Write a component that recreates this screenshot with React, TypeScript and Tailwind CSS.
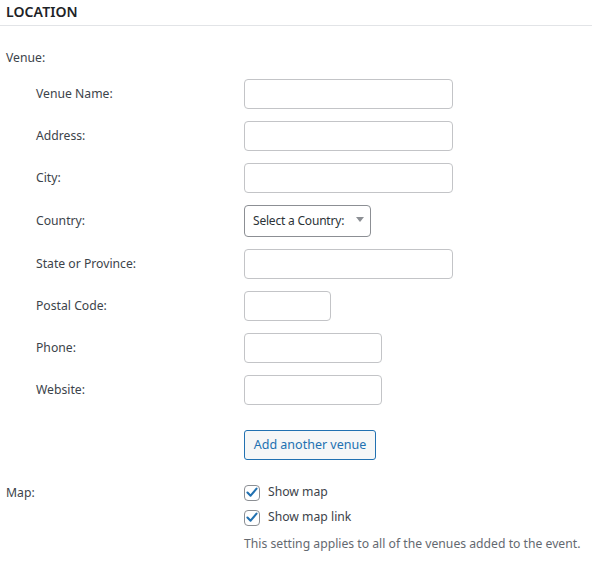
import React from "react";

const font = { fontFamily: '"Noto Sans", "Open Sans", sans-serif' };

function Check({ label }: { label: string }) {
  return (
    <label className="flex items-center h-[25px]">
      <span className="w-4 h-4 shrink-0 rounded-[4px] border border-[#8c8f94] bg-white flex items-center justify-center">
        <svg width="15" height="15" viewBox="0 0 20 20">
          <path d="M3.5 10 L8 14.5 L16.5 4.5" fill="none" stroke="#2271b1" strokeWidth="3" strokeLinecap="round" strokeLinejoin="round" />
        </svg>
      </span>
      <span className="ml-2 text-[12.2px] text-[#3c434a] whitespace-nowrap">{label}</span>
    </label>
  );
}

export default function App() {
  const rows: { label: string; w: string; select?: boolean }[] = [
    { label: "Venue Name:", w: "w-[209px]" },
    { label: "Address:", w: "w-[209px]" },
    { label: "City:", w: "w-[209px]" },
    { label: "Country:", w: "w-[127px]", select: true },
    { label: "State or Province:", w: "w-[209px]" },
    { label: "Postal Code:", w: "w-[87px]" },
    { label: "Phone:", w: "w-[138px]" },
    { label: "Website:", w: "w-[138px]" },
  ];
  return (
    <div className="w-[592px] h-[568px] bg-white text-[#3c434a]" style={font}>
      <div className="pl-[6px] pt-[2px] h-[26px] border-b border-[#e2e4e7]">
        <h2 className="text-[14px] font-semibold text-[#1d2327] leading-[20px] tracking-[0.1px]">LOCATION</h2>
      </div>
      <div className="pl-[6px] mt-[22px] text-[12.2px] leading-[20px]">Venue:</div>
      <div className="flex flex-col gap-[12px] mt-[11px]">
        {rows.map((r) => (
          <div key={r.label} className={`flex items-center ${r.select ? "h-[32px]" : "h-[30px]"}`}>
            <div className="w-[244px] shrink-0 pl-[36px] text-[12.2px] text-[#3c434a]">{r.label}</div>
            {r.select ? (
              <div className={`${r.w} h-[32px] shrink-0 border border-[#8c8f94] rounded-[4px] flex items-start justify-between pl-[8px] pr-[6px] text-[12px] tracking-[-0.2px] text-[#2c3338]`}>
                <span className="whitespace-nowrap mt-[6px]">Select a Country:</span>
                <svg width="8" height="5" viewBox="0 0 8 5" className="mt-[11px] shrink-0">
                  <path d="M0 0 L8 0 L4 5 Z" fill="#8c8f94" />
                </svg>
              </div>
            ) : (
              <div className={`${r.w} h-[30px] shrink-0 border border-[#c3c4c7] rounded-[4px] bg-white`} />
            )}
          </div>
        ))}
      </div>
      <div className="pl-[244px] mt-[25px]">
        <button className="h-[30px] w-[132px] border border-[#2271b1] rounded-[3px] bg-[#f6f7f7] text-[#2271b1] text-[12.5px] flex items-center justify-center whitespace-nowrap">
          Add another venue
        </button>
      </div>
      <div className="flex mt-[20px]">
        <div className="w-[244px] shrink-0 pl-[6px] text-[12.2px] leading-[25px]">Map:</div>
        <div className="flex flex-col">
          <Check label="Show map" />
          <Check label="Show map link" />
          <p className="text-[12.2px] text-[#646970] mt-[4px] leading-[20px] whitespace-nowrap">This setting applies to all of the venues added to the event.</p>
        </div>
      </div>
    </div>
  );
}
